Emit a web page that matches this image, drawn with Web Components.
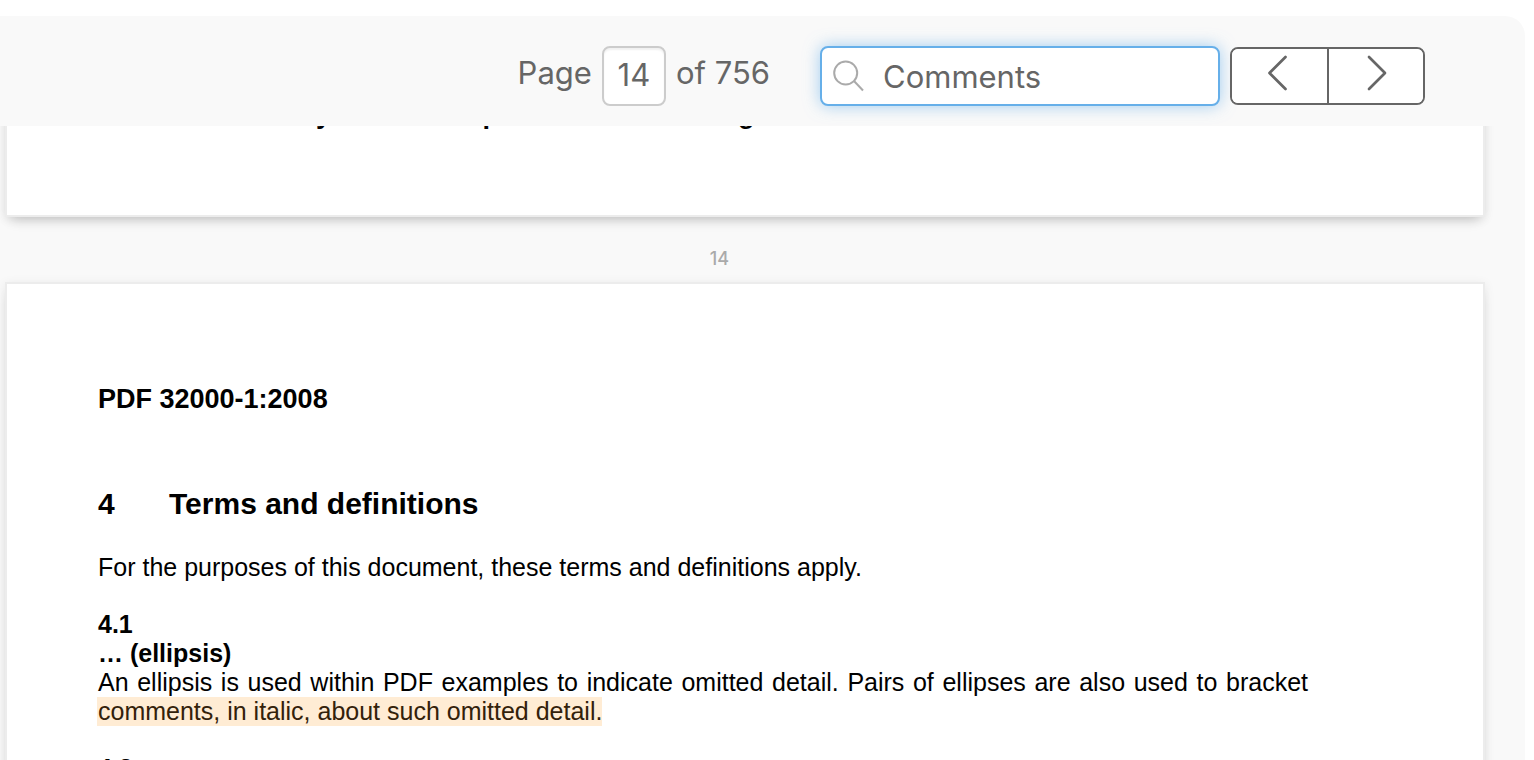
<!DOCTYPE html>
<html lang="en">
<head>
<meta charset="utf-8">
<title>PDF viewer</title>
<style>
  html, body { height: 100%; }
  body { margin: 0; background: #fff; overflow: hidden; }
</style>
</head>
<body>
<pdf-viewer>
  <viewer-toolbar slot="toolbar"></viewer-toolbar>
  <pdf-page class="previous">
    <page-footer>© Adobe Systems Incorporated 2008 – All rights reserved</page-footer>
  </pdf-page>
  <page-label>14</page-label>
  <pdf-page>
    <doc-title>PDF 32000-1:2008</doc-title>
    <doc-section number="4" heading="Terms and definitions">
      <doc-text>For the purposes of this document, these terms and definitions apply.</doc-text>
      <doc-term number="4.1" term="… (ellipsis)">An ellipsis is used within PDF examples to indicate omitted detail. Pairs of ellipses are also used to bracket <search-hit>comments, in italic, about such omitted detail.</search-hit></doc-term>
      <doc-term number="4.2"></doc-term>
    </doc-section>
  </pdf-page>
</pdf-viewer>

<script>
const define = (name, html) => {
  const template = document.createElement('template');
  template.innerHTML = html;
  customElements.define(name, class extends HTMLElement {
    constructor() {
      super();
      this.attachShadow({ mode: 'open' }).append(template.content.cloneNode(true));
    }
    connectedCallback() {
      for (const el of this.shadowRoot.querySelectorAll('[data-attr]')) {
        const value = this.getAttribute(el.dataset.attr);
        if (value === null) el.hidden = true;
        else el.textContent = value;
      }
    }
  });
};

define('pdf-viewer', `
  <style>
    :host { display: flex; flex-direction: column; box-sizing: border-box; height: 100vh; padding: 16px 9px 0 0; font-family: "Liberation Sans", Arial, sans-serif; }
    .frame { flex: 1; min-height: 0; display: flex; flex-direction: column; background: #f9f9f9; border-radius: 0 20px 0 0; }
    main { flex: 1; min-height: 0; overflow: hidden; padding: 0 40px 0 5px; }
    ::slotted(.previous) { margin-top: -60px; }
  </style>
  <div class="frame"><slot name="toolbar"></slot><main><slot></slot></main></div>`);

define('viewer-toolbar', `
  <style>
    :host { display: block; padding: 30px 100px 20px 0; font: 400 31px/40px Inter, sans-serif; color: #666; }
    .bar { display: flex; justify-content: flex-end; align-items: center; }
    .pages { display: flex; align-items: center; gap: 10px; margin-right: 50px; }
    .pages label, .pages span { padding-bottom: 6px; }
    input { box-sizing: border-box; font: inherit; color: inherit; outline: 0; }
    #page { width: 64px; height: 60px; padding: 0 0 4px; border: 2px solid #ccc; border-radius: 8px; background: #fff; text-align: center; box-shadow: inset 0 2px 2px rgba(0,0,0,.06); }
    .search { box-sizing: border-box; display: flex; align-items: center; width: 400px; height: 60px; padding-left: 11px; margin-right: 10px; border: 2px solid #66afe9; border-radius: 8px; background: #fff; box-shadow: 0 0 16px rgba(102,175,233,.6); }
    .search label { display: flex; }
    #query { flex: 1; min-width: 0; height: 54px; padding: 0 12px 0 18px; border: 0; background: transparent; }
    .group { display: flex; box-sizing: border-box; width: 195px; height: 58px; border: 2px solid #666; border-radius: 8px; background: #fff; overflow: hidden; }
    button { flex: 1; padding: 0 0 6px; border: 0; background: #fff; color: inherit; display: flex; align-items: center; justify-content: center; }
    button + button { border-left: 2px solid #666; }
    svg { display: block; fill: none; stroke: currentColor; }
    .lens { color: #aaa; }
  </style>
  <div class="bar">
    <div class="pages"><label for="page">Page</label><input id="page" type="text" value="14"><span>of 756</span></div>
    <div class="search">
      <label for="query" aria-label="Search"><svg class="lens" width="32" height="32" viewBox="0 0 32 32" stroke-width="2"><circle cx="12.700" cy="13" r="11.500"/><path d="M21 21 30 30.500"/></svg></label>
      <input id="query" type="text" value="Comments">
    </div>
    <div class="group">
      <button type="button" aria-label="Previous result"><svg width="24" height="36" viewBox="0 0 24 36" stroke-width="2.700" stroke-linecap="round" stroke-linejoin="round"><path d="M18.500 2 2.500 18 18.500 34"/></svg></button>
      <button type="button" aria-label="Next result"><svg width="24" height="36" viewBox="0 0 24 36" stroke-width="2.700" stroke-linecap="round" stroke-linejoin="round"><path d="M5 2 21 18 5 34"/></svg></button>
    </div>
  </div>`);

define('pdf-page', `
  <style>
    :host { display: block; box-sizing: border-box; padding: 100px 175px 85px 91px; border: 2px solid #ececec; background: #fff; color: #000; box-shadow: 0 8px 12px -6px rgba(0,0,0,.2), 0 2px 10px rgba(0,0,0,.08); }
    :host(.previous) { padding-top: 31px; padding-bottom: 86px; }
  </style><slot></slot>`);

define('page-footer', `
  <style>:host { display: block; padding-left: 82px; font-size: 27px; line-height: 30px; font-weight: 700; white-space: nowrap; }</style><slot></slot>`);

define('page-label', `
  <style>:host { display: block; padding: 30px 51px 11px 0; text-align: center; font: 500 18px/24px Inter, sans-serif; color: #aaa; }</style><slot></slot>`);

define('doc-title', `
  <style>:host { display: block; font-size: 27px; line-height: 30px; font-weight: 700; }</style><slot></slot>`);

define('doc-section', `
  <style>
    :host { display: block; padding-top: 73px; }
    h2 { display: flex; margin: 0 0 32px; font-size: 30px; line-height: 34px; }
    .number { width: 71px; }
  </style>
  <h2><span class="number" data-attr="number"></span><span data-attr="heading"></span></h2><slot></slot>`);

define('doc-text', `
  <style>:host { display: block; font-size: 25px; line-height: 29px; }</style><slot></slot>`);

define('doc-term', `
  <style>
    :host { display: block; padding-top: 28px; font-size: 25px; line-height: 29px; }
    h3, p { margin: 0; font-size: inherit; }
    p { text-align: justify; }
    h3 span { display: block; }
    h3 span[hidden] { display: none; }
  </style>
  <h3><span data-attr="number"></span><span data-attr="term"></span></h3><p><slot></slot></p>`);

define('search-hit', `
  <style>
    mark { margin-left: -1px; padding: 0 0 1px 1px; background: #ffecd4; color: #33210a; }
  </style><mark><slot></slot></mark>`);
</script>
</body>
</html>
